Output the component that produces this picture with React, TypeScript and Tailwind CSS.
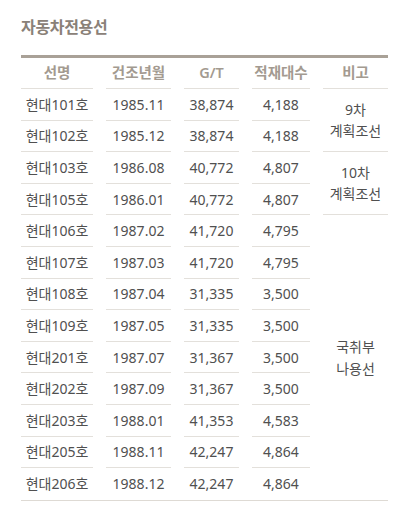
const rows = [
  ["현대101호", "1985.11", "38,874", "4,188"],
  ["현대102호", "1985.12", "38,874", "4,188"],
  ["현대103호", "1986.08", "40,772", "4,807"],
  ["현대105호", "1986.01", "40,772", "4,807"],
  ["현대106호", "1987.02", "41,720", "4,795"],
  ["현대107호", "1987.03", "41,720", "4,795"],
  ["현대108호", "1987.04", "31,335", "3,500"],
  ["현대109호", "1987.05", "31,335", "3,500"],
  ["현대201호", "1987.07", "31,367", "3,500"],
  ["현대202호", "1987.09", "31,367", "3,500"],
  ["현대203호", "1988.01", "41,353", "4,583"],
  ["현대205호", "1988.11", "42,247", "4,864"],
  ["현대206호", "1988.12", "42,247", "4,864"],
];

const headers = ["선명", "건조년월", "G/T", "적재대수", "비고"];

export default function App() {
  const cells = rows.flatMap((r, i) =>
    r.map((c, j) => (
      <div
        key={`${i}-${j}`}
        className={`flex items-center justify-center ${i < rows.length - 1 ? "border-b border-[#e3e0db]" : ""}`}
        style={{ gridRow: i + 2, gridColumn: j + 1 }}
      >
        {c}
      </div>
    ))
  );

  return (
    <div
      className="min-h-[529px] w-[400px] bg-white pl-[21px] pr-[12px] pt-[14px]"
      style={{ fontFamily: '"Noto Sans", "Noto Sans CJK KR", sans-serif' }}
    >
      <h2
        className="text-[16px] font-bold leading-[24px] tracking-[-0.02em] text-[#8a8178]"
        style={{ fontFamily: '"Noto Sans CJK KR", sans-serif' }}
      >
        자동차전용선
      </h2>

      <div className="mt-[17px] grid w-[367px] grid-cols-[72px_65px_55px_58px_65px] grid-rows-[31px_repeat(13,31.6px)] gap-x-[13px] border-t-[3px] border-b border-t-[#a9a197] border-b-[#dedad4] text-[14px] text-[#505050]">
        {headers.map((h) => (
          <div
            key={h}
            className="flex items-center justify-center border-b border-[#e3e0db] text-[14.5px] font-semibold text-[#a39a90]"
          >
            {h}
          </div>
        ))}

        {cells}

        <div className="col-start-5 row-start-2 row-span-2 flex flex-col items-center justify-center border-b border-[#e3e0db] leading-[21px]">
          <span>9차</span>
          <span>계획조선</span>
        </div>
        <div className="col-start-5 row-start-4 row-span-2 flex flex-col items-center justify-center border-b border-[#e3e0db] leading-[21px]">
          <span>10차</span>
          <span>계획조선</span>
        </div>
        <div className="col-start-5 row-start-6 row-span-9 flex flex-col items-center justify-center leading-[22px]">
          <span>국취부</span>
          <span>나용선</span>
        </div>
      </div>
    </div>
  );
}
